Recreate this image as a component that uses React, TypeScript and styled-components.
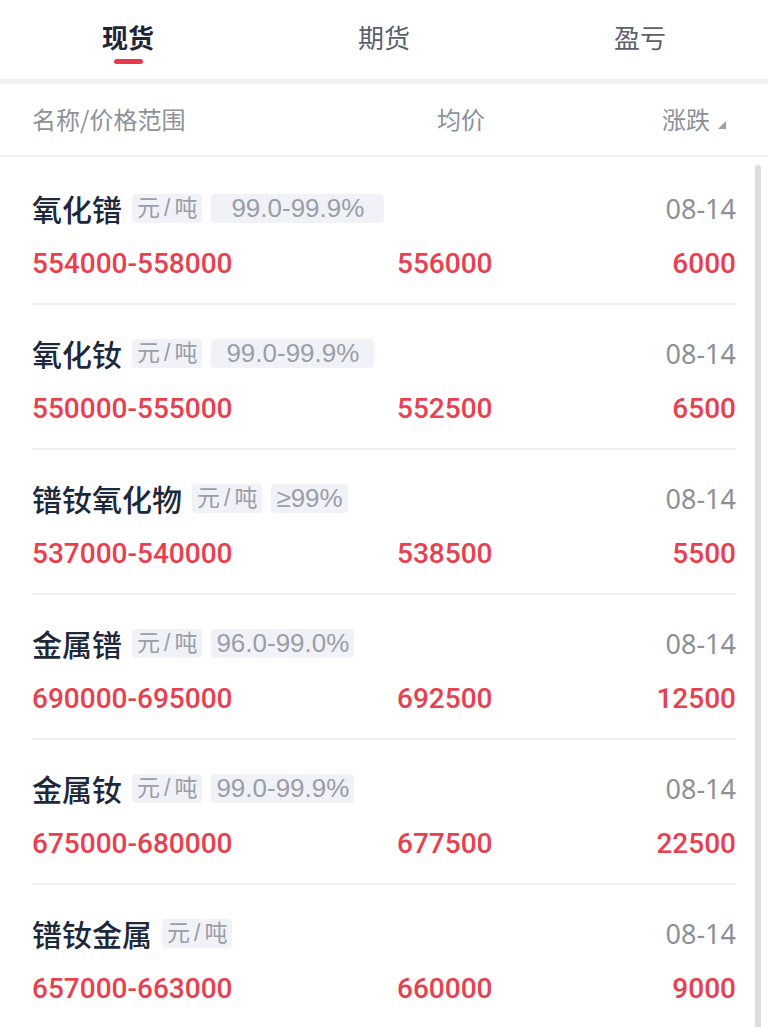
import * as React from 'react';
import styled, { createGlobalStyle } from 'styled-components';

const GlobalStyle = createGlobalStyle`
  html, body {
    margin: 0;
    padding: 0;
    background: #ffffff;
    font-family: "Noto Sans CJK SC", "Noto Sans", sans-serif;
  }
`;

const Page = styled.div`
  width: 768px;
  height: 1027px;
  overflow: hidden;
  background: #ffffff;
`;

const TabBar = styled.div`
  display: grid;
  grid-template-columns: repeat(3, 1fr);
  height: 79px;
  border-bottom: 5px solid #f2f2f4;
`;

const Tab = styled.div<{ $active?: boolean }>`
  display: flex;
  flex-direction: column;
  align-items: center;
  padding-top: 18px;
  font-size: 26px;
  line-height: 38px;
  font-weight: ${(p) => (p.$active ? 600 : 400)};
  color: ${(p) => (p.$active ? '#1d2638' : '#5b616c')};
`;

const Underline = styled.div`
  width: 29px;
  height: 5px;
  margin-top: 3px;
  border-radius: 3px;
  background: #e8394f;
`;

const Header = styled.div`
  display: grid;
  grid-template-columns: 405px 1fr auto;
  align-items: center;
  height: 73px;
  padding: 0 42px 3px 32px;
  box-sizing: border-box;
  border-bottom: 2px solid #f1f1f3;
  font-size: 24px;
  color: #8d919a;
`;

const SortLabel = styled.div`
  display: flex;
  align-items: center;
  gap: 8px;
  svg {
    margin-top: 14px;
  }
`;

const List = styled.div`
  position: relative;
  padding-top: 3px;
`;

const ScrollThumb = styled.div`
  position: absolute;
  top: 8px;
  right: 7px;
  width: 6px;
  height: 900px;
  border-radius: 3px;
  background: #dcdcde;
`;

const Row = styled.div`
  margin: 0 32px;
  padding: 30px 0 22px;
  border-bottom: 2px solid #f0f0f2;
`;

const TopLine = styled.div`
  display: flex;
  align-items: center;
  height: 36px;
`;

const Name = styled.div`
  font-size: 30px;
  font-weight: 500;
  color: #1e283b;
  margin-right: 10px;
`;

const Tag = styled.span<{ $pad: number }>`
  display: inline-flex;
  align-items: center;
  height: 29px;
  padding: 0 ${(p) => p.$pad}px;
  margin-right: 9px;
  border-radius: 4px;
  background: #f1f2f7;
  color: #9a9ea8;
  font-family: "Liberation Sans", "Noto Sans CJK SC", sans-serif;
  font-size: 26px;
  line-height: 29px;
`;

const UnitTag = styled(Tag)`
  font-size: 23px;
  letter-spacing: 4px;
  padding-right: 1px;
`;

const DateText = styled.div`
  margin-left: auto;
  font-family: "Noto Sans", sans-serif;
  font-size: 27px;
  color: #8b9198;
`;

const PriceLine = styled.div`
  display: grid;
  grid-template-columns: 365px 1fr auto;
  align-items: center;
  height: 36px;
  margin-top: 19px;
  font-family: Roboto, "Noto Sans", sans-serif;
  font-size: 28px;
  font-weight: 500;
  color: #e8404f;
`;

interface Item {
  name: string;
  grade?: string;
  pad: number;
  range: string;
  avg: string;
  change: string;
}

const items: Item[] = [
  { name: '氧化镨', grade: '99.0-99.9%', pad: 20, range: '554000-558000', avg: '556000', change: '6000' },
  { name: '氧化钕', grade: '99.0-99.9%', pad: 15, range: '550000-555000', avg: '552500', change: '6500' },
  { name: '镨钕氧化物', grade: '≥99%', pad: 5, range: '537000-540000', avg: '538500', change: '5500' },
  { name: '金属镨', grade: '96.0-99.0%', pad: 5, range: '690000-695000', avg: '692500', change: '12500' },
  { name: '金属钕', grade: '99.0-99.9%', pad: 5, range: '675000-680000', avg: '677500', change: '22500' },
  { name: '镨钕金属', pad: 5, range: '657000-663000', avg: '660000', change: '9000' },
];

export default function App() {
  return (
    <Page>
      <GlobalStyle />
      <TabBar>
        <Tab $active>
          现货
          <Underline />
        </Tab>
        <Tab>期货</Tab>
        <Tab>盈亏</Tab>
      </TabBar>
      <Header>
        <div>名称/价格范围</div>
        <div>均价</div>
        <SortLabel>
          涨跌
          <svg width="8" height="8" viewBox="0 0 8 8">
            <polygon points="0,8 8,8 8,0" fill="#9a9ea6" />
          </svg>
        </SortLabel>
      </Header>
      <List>
        {items.map((it) => (
          <Row key={it.name}>
            <TopLine>
              <Name>{it.name}</Name>
              <UnitTag $pad={5}>元/吨</UnitTag>
              {it.grade && <Tag $pad={it.pad}>{it.grade}</Tag>}
              <DateText>08-14</DateText>
            </TopLine>
            <PriceLine>
              <div>{it.range}</div>
              <div>{it.avg}</div>
              <div>{it.change}</div>
            </PriceLine>
          </Row>
        ))}
        <ScrollThumb />
      </List>
    </Page>
  );
}
